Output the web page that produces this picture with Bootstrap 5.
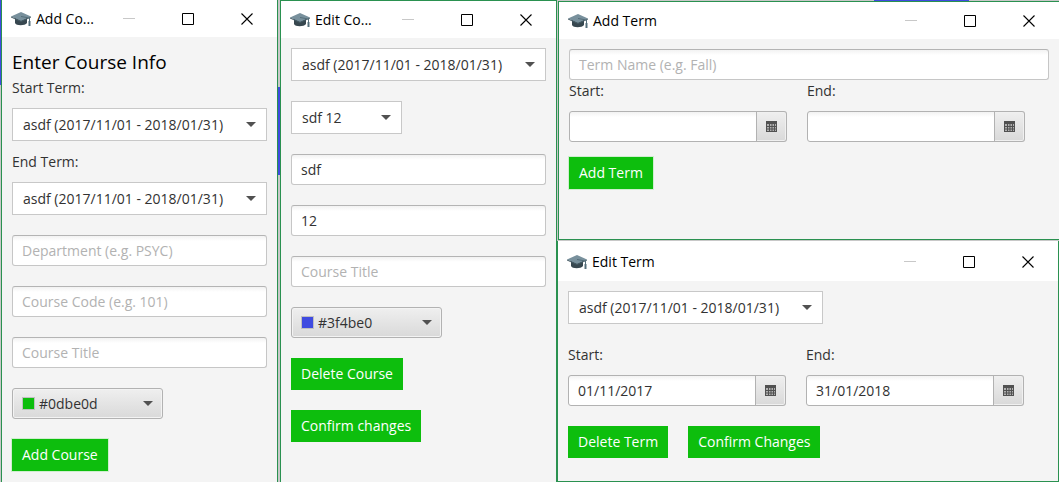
<!DOCTYPE html>
<html lang="en">
<head>
<meta charset="utf-8">
<meta name="viewport" content="width=device-width, initial-scale=1">
<title>Course and term dialogs</title>
<link href="https://cdn.jsdelivr.net/npm/bootstrap@5.3.0/dist/css/bootstrap.min.css" rel="stylesheet">
<style>
  body { background: #c8c8c8; color: #323232; font: 14px/20px "Open Sans", "Noto Sans", sans-serif; }
  /* Parts of a blue calendar behind the dialogs show through the gaps */
  .desk {
    display: grid; grid-template-columns: 279fr 278fr 502fr; min-height: 100vh;
    background:
      linear-gradient(#3f4be0, #3f4be0) 0 0 / 1px 85px no-repeat,
      linear-gradient(#3f4be0, #3f4be0) 26.3% 87px / 2px 88px no-repeat,
      linear-gradient(#3f4be0, #3f4be0) 90.7% 0 / 9% 1px no-repeat;
  }
  .win { background: #f4f4f4; border: 1px solid #2a9150; }
  .win-first { border-top: 0; border-bottom: 0; margin: 0 1px; }
  .win-second { border-bottom: 0; margin-left: 1px; }
  .win-add-term { border-right: 0; margin-left: 1px; margin-top: 1px; }
  .win-edit-term { border-top: 0; }
  .right-col { display: grid; grid-template-rows: 240px 1fr; row-gap: 1px; }
  .title-bar { background: #fff; height: 37px; color: #000; padding: 0 1px 0 9px; }
  .win-edit-term .title-bar { height: 40px; padding-top: 2px; }
  .title-bar .cap { width: 20px; height: 20px; margin-right: 5px; flex: none; }
  .cap-btn { border: 0; background: none; padding: 0; width: 59px; height: 36px; display: grid; place-items: center; }
  .pane { padding: 10px; }
  .pane h1 { font-size: 19px; line-height: 30px; margin: 0; color: #000; }
  .stack { display: flex; flex-direction: column; align-items: flex-start; gap: 20px; }
  .side-by-side { display: flex; gap: 20px; }
  .field-label { display: block; line-height: 22px; margin-bottom: 9px; }
  .combo + .field-label { margin-top: 10px; }
  .combo, .box, .picker {
    color: #323232; font-size: 14px; line-height: 20px; border-radius: 0; display: block;
  }
  .combo {
    height: 33px; padding: 0 36px 0 10px; border: 1px solid #c8c8c8;
    background-color: #fff; background-position: right 10px center; background-size: 10px 5px;
    background-image: url("data:image/svg+xml,%3Csvg xmlns='http://www.w3.org/2000/svg' viewBox='0 0 10 5'%3E%3Cpath d='M0 0h10L5 5z' fill='%23515151'/%3E%3C/svg%3E");
  }
  .combo-term { width: 255px; }
  .combo-short { width: 111px; }
  .box {
    height: 31px; padding: 0 9px; border: 1px solid #c6c6c6; border-top-color: #b4b4b4; border-radius: 3px;
    background: linear-gradient(#f2f2f2, #fff 5px);
  }
  .box::placeholder { color: #b2b2b2; opacity: 1; }
  .picker {
    width: 151px; height: 31px; border: 1px solid #b2b2b2; border-radius: 3px; padding: 0 9px;
    background: linear-gradient(#efefef, #d9d9d9); box-shadow: inset 0 0 0 1px #f3f3f3;
    display: flex; align-items: center;
  }
  .swatch { width: 13px; height: 13px; border: 1px solid #c0c0c0; margin-right: 4px; }
  .date-field { width: 218px; height: 31px; flex-wrap: nowrap; }
  .date-field .box { border-color: #b2b2b2; border-radius: 3px 0 0 3px; min-width: 0; flex: 1; }
  .date-btn {
    width: 31px; border: 1px solid #b2b2b2; border-left: 0; border-radius: 0 3px 3px 0; padding: 0;
    background: linear-gradient(#efefef, #d9d9d9); box-shadow: inset 0 0 0 1px #f0f0f0;
    display: grid; place-items: center;
  }
  .btn-go {
    --bs-btn-color: #fff; --bs-btn-bg: #0dbe0d; --bs-btn-hover-color: #fff; --bs-btn-hover-bg: #0ba80b;
    --bs-btn-border-width: 0; --bs-btn-border-radius: 0; --bs-btn-padding-x: 10px; --bs-btn-padding-y: 6px;
    --bs-btn-font-size: 14px; --bs-btn-line-height: 20px;
  }
  .btn-ringed { box-shadow: 0 0 0 1px #cfeecf; }
  .term-submit { margin-top: 15px; }
</style>
</head>
<body>
<svg class="d-none" aria-hidden="true">
  <symbol id="cap" viewBox="0 0 20 20">
    <path d="M4 9v5c1 3 10 3 12 0V9z" fill="#37474f"/>
    <path d="M0 7.500 10 3l10 4.500L10 12z" fill="#78909c"/>
    <path d="M0 7.500 10 12l10-4.500v1L10 13 0 8.500z" fill="#455a64"/>
    <path d="M10 7.500 18.500 9v6" fill="none" stroke="#546e7a"/>
    <path d="M17.500 12h2v5h-2z" fill="#546e7a"/>
  </symbol>
  <symbol id="minimise" viewBox="0 0 12 12"><path d="M0 5.500h12" stroke="#c8c8c8"/></symbol>
  <symbol id="maximise" viewBox="0 0 12 12"><path d="M.5.5h11v11H.5z" fill="none" stroke="#000"/></symbol>
  <symbol id="close" viewBox="0 0 12 12"><path d="m.5.5 11 11m0-11-11 11" stroke="#000" stroke-width="1.100"/></symbol>
  <symbol id="arrow" viewBox="0 0 10 5"><path d="M0 0h10L5 5z" fill="#515151"/></symbol>
  <symbol id="calendar" viewBox="0 0 11 11">
    <path d="M0 0h11v11H0z" fill="#515151"/>
    <path d="M1 3h2v2H1zm3 0h1.500v2H4zm2.500 0H8v2H6.500zM9 3h1v2H9zM1 6h2v1.500H1zm3 0h1.500v1.500H4zm2.500 0H8v1.500H6.500zM9 6h1v1.500H9zM1 8.500h2V10H1zm3 0h1.500V10H4zm2.500 0H8V10H6.500zM9 8.500h1V10H9z" fill="#b0b0b0"/>
  </symbol>
</svg>

<main class="desk">
  <section class="win win-first">
    <header class="title-bar d-flex align-items-center">
      <svg class="cap"><use href="#cap"/></svg>
      <span class="text-nowrap me-auto">Add Co...</span>
      <button class="cap-btn" aria-label="Minimise"><svg width="12" height="12"><use href="#minimise"/></svg></button>
      <button class="cap-btn" aria-label="Maximise"><svg width="12" height="12"><use href="#maximise"/></svg></button>
      <button class="cap-btn" aria-label="Close"><svg width="12" height="12"><use href="#close"/></svg></button>
    </header>
    <form class="pane stack">
      <div>
        <h1 class="fw-normal">Enter Course Info</h1>
        <label class="field-label" for="start-term">Start Term:</label>
        <select class="form-select combo combo-term" id="start-term"><option>asdf (2017/11/01 - 2018/01/31)</option></select>
        <label class="field-label" for="end-term">End Term:</label>
        <select class="form-select combo combo-term" id="end-term"><option>asdf (2017/11/01 - 2018/01/31)</option></select>
      </div>
      <input class="form-control box" aria-label="Department" placeholder="Department (e.g. PSYC)">
      <input class="form-control box" aria-label="Course code" placeholder="Course Code (e.g. 101)">
      <input class="form-control box" aria-label="Course title" placeholder="Course Title">
      <button type="button" class="picker"><span class="swatch" style="background:#0dbe0d"></span>#0dbe0d<svg class="ms-auto" width="10" height="5"><use href="#arrow"/></svg></button>
      <button type="button" class="btn btn-go btn-ringed">Add Course</button>
    </form>
  </section>

  <section class="win win-second">
    <header class="title-bar d-flex align-items-center">
      <svg class="cap"><use href="#cap"/></svg>
      <span class="text-nowrap me-auto">Edit Co...</span>
      <button class="cap-btn" aria-label="Minimise"><svg width="12" height="12"><use href="#minimise"/></svg></button>
      <button class="cap-btn" aria-label="Maximise"><svg width="12" height="12"><use href="#maximise"/></svg></button>
      <button class="cap-btn" aria-label="Close"><svg width="12" height="12"><use href="#close"/></svg></button>
    </header>
    <form class="pane stack">
      <select class="form-select combo combo-term" aria-label="Term"><option>asdf (2017/11/01 - 2018/01/31)</option></select>
      <select class="form-select combo combo-short" aria-label="Course"><option>sdf 12</option></select>
      <input class="form-control box" aria-label="Department" value="sdf">
      <input class="form-control box" aria-label="Course code" value="12">
      <input class="form-control box" aria-label="Course title" placeholder="Course Title">
      <button type="button" class="picker"><span class="swatch" style="background:#3f4be0"></span>#3f4be0<svg class="ms-auto" width="10" height="5"><use href="#arrow"/></svg></button>
      <button type="button" class="btn btn-go">Delete Course</button>
      <button type="button" class="btn btn-go">Confirm changes</button>
    </form>
  </section>

  <div class="right-col">
    <section class="win win-add-term">
      <header class="title-bar d-flex align-items-center">
        <svg class="cap"><use href="#cap"/></svg>
        <span class="text-nowrap me-auto">Add Term</span>
        <button class="cap-btn" aria-label="Minimise"><svg width="12" height="12"><use href="#minimise"/></svg></button>
        <button class="cap-btn" aria-label="Maximise"><svg width="12" height="12"><use href="#maximise"/></svg></button>
        <button class="cap-btn" aria-label="Close"><svg width="12" height="12"><use href="#close"/></svg></button>
      </header>
      <form class="pane">
        <input class="form-control box" aria-label="Term name" placeholder="Term Name (e.g. Fall)">
        <div class="side-by-side">
          <div>
            <label class="field-label" for="add-start">Start:</label>
            <div class="input-group date-field">
              <input class="form-control box" id="add-start">
              <button type="button" class="date-btn" aria-label="Pick start date"><svg width="11" height="11"><use href="#calendar"/></svg></button>
            </div>
          </div>
          <div>
            <label class="field-label" for="add-end">End:</label>
            <div class="input-group date-field">
              <input class="form-control box" id="add-end">
              <button type="button" class="date-btn" aria-label="Pick end date"><svg width="11" height="11"><use href="#calendar"/></svg></button>
            </div>
          </div>
        </div>
        <button type="button" class="btn btn-go btn-ringed term-submit">Add Term</button>
      </form>
    </section>

    <section class="win win-edit-term">
      <header class="title-bar d-flex align-items-center">
        <svg class="cap"><use href="#cap"/></svg>
        <span class="text-nowrap me-auto">Edit Term</span>
        <button class="cap-btn" aria-label="Minimise"><svg width="12" height="12"><use href="#minimise"/></svg></button>
        <button class="cap-btn" aria-label="Maximise"><svg width="12" height="12"><use href="#maximise"/></svg></button>
        <button class="cap-btn" aria-label="Close"><svg width="12" height="12"><use href="#close"/></svg></button>
      </header>
      <form class="pane stack">
        <select class="form-select combo combo-term" aria-label="Term"><option>asdf (2017/11/01 - 2018/01/31)</option></select>
        <div class="side-by-side">
          <div>
            <label class="field-label" for="edit-start">Start:</label>
            <div class="input-group date-field">
              <input class="form-control box" id="edit-start" value="01/11/2017">
              <button type="button" class="date-btn" aria-label="Pick start date"><svg width="11" height="11"><use href="#calendar"/></svg></button>
            </div>
          </div>
          <div>
            <label class="field-label" for="edit-end">End:</label>
            <div class="input-group date-field">
              <input class="form-control box" id="edit-end" value="31/01/2018">
              <button type="button" class="date-btn" aria-label="Pick end date"><svg width="11" height="11"><use href="#calendar"/></svg></button>
            </div>
          </div>
        </div>
        <div class="side-by-side">
          <button type="button" class="btn btn-go">Delete Term</button>
          <button type="button" class="btn btn-go">Confirm Changes</button>
        </div>
      </form>
    </section>
  </div>
</main>
<script src="https://cdn.jsdelivr.net/npm/bootstrap@5.3.0/dist/js/bootstrap.bundle.min.js"></script>
</body>
</html>
